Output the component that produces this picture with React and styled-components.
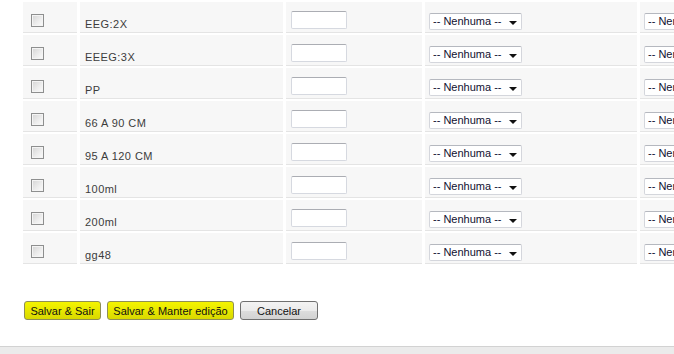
import React from 'react';
import styled, { createGlobalStyle } from 'styled-components';

const GlobalStyle = createGlobalStyle`
  html, body {
    margin: 0;
    padding: 0;
    background: #fff;
    overflow: hidden;
  }
  body {
    font-family: "Liberation Sans", Arial, sans-serif;
    font-size: 11px;
    color: #333;
  }
`;

const Page = styled.div`
  width: 674px;
  height: 354px;
  display: flex;
  flex-direction: column;
  overflow: hidden;
`;

const Content = styled.div`
  flex: 1;
  padding: 2px 0 0 23px;
`;

const Table = styled.div`
  display: flex;
  flex-direction: column;
  gap: 2px;
  width: 900px;
`;

const Row = styled.div`
  display: grid;
  grid-template-columns: 54px 203px 136px 212px 212px;
  column-gap: 3px;
`;

const Cell = styled.div`
  background: #f7f7f7;
  border-bottom: 1px solid #e4e4e4;
  box-sizing: content-box;
  padding-left: ${(p) => p.$pad || 4}px;
  padding-top: ${(p) => p.$top || 0}px;
  height: ${(p) => 30 - (p.$top || 0)}px;
`;

const Label = styled.span`
  display: block;
  line-height: 13px;
  color: #3c3c3c;
  font-family: "Liberation Sans", Arial, sans-serif;
  font-size: 11px;
  letter-spacing: 0.45px;
`;

const Check = styled.input.attrs({ type: 'checkbox' })`
  appearance: none;
  display: block;
  margin: 0;
  width: 13px;
  height: 13px;
  box-sizing: border-box;
  border: 1px solid #8e8f8f;
  background: linear-gradient(135deg, #d4d4d4 0%, #eeeeee 60%, #fbfbfb 100%);
  box-shadow: inset 0 0 0 1px #f4f4f4;
`;

const TextBox = styled.input.attrs({ type: 'text' })`
  display: block;
  margin: 0;
  width: 56px;
  height: 18px;
  box-sizing: border-box;
  border: 1px solid #d6d9e0;
  border-top-color: #abadb3;
  border-radius: 2px;
  background: #fff;
  padding: 0 2px;
`;

const SelectWrap = styled.div`
  position: relative;
  width: 93px;
  height: 17px;

  &::after {
    content: '';
    position: absolute;
    right: 5px;
    top: 8px;
    border-left: 4px solid transparent;
    border-right: 4px solid transparent;
    border-top: 4px solid #111;
    pointer-events: none;
  }
`;

const Select = styled.select`
  appearance: none;
  display: block;
  width: 100%;
  height: 100%;
  margin: 0;
  box-sizing: border-box;
  border: 1px solid #d4d6dc;
  border-top-color: #b5b8bf;
  border-radius: 2px;
  background: #fff;
  padding: 0 0 0 3px;
  font-family: "Liberation Sans", Arial, sans-serif;
  font-size: 11px;
  color: #101030;
  line-height: 15px;
`;

const Buttons = styled.div`
  display: flex;
  gap: 6px;
  margin-top: 37px;
  padding-left: 1px;
`;

const Button = styled.button`
  height: 19px;
  width: ${(p) => p.$w}px;
  margin: 0;
  padding: 0;
  box-sizing: border-box;
  white-space: nowrap;
  font-family: "Liberation Sans", Arial, sans-serif;
  font-size: 11px;
  color: #111;
  border-radius: 3px;
  border: 1px solid ${(p) => (p.$yellow ? '#8f8f55' : '#707070')};
  background: ${(p) =>
    p.$yellow
      ? 'linear-gradient(#f4f400, #e6e600 55%, #d9d900)'
      : 'linear-gradient(#f3f3f3, #ebebeb 50%, #dddddd 51%, #d2d2d2)'};
`;

const Footer = styled.div`
  height: 7px;
  border-top: 1px solid #d2d2d2;
  background: #ebebeb;
`;

const rows = ['EEG:2X', 'EEEG:3X', 'PP', '66 A 90 CM', '95 A 120 CM', '100ml', '200ml', 'gg48'];

const Choice = () => (
  <SelectWrap>
    <Select defaultValue="">
      <option value="">-- Nenhuma --</option>
    </Select>
  </SelectWrap>
);

export default function App() {
  return (
    <Page>
      <GlobalStyle />
      <Content>
        <Table>
          {rows.map((name) => (
            <Row key={name}>
              <Cell $pad={8} $top={12}>
                <Check />
              </Cell>
              <Cell $pad={5} $top={16}>
                <Label>{name}</Label>
              </Cell>
              <Cell $pad={5} $top={9}>
                <TextBox />
              </Cell>
              <Cell $pad={4} $top={11}>
                <Choice />
              </Cell>
              <Cell $pad={4} $top={11}>
                <Choice />
              </Cell>
            </Row>
          ))}
        </Table>
        <Buttons>
          <Button $yellow $w={77}>Salvar &amp; Sair</Button>
          <Button $yellow $w={127}>Salvar &amp; Manter edição</Button>
          <Button $w={78}>Cancelar</Button>
        </Buttons>
      </Content>
      <Footer />
    </Page>
  );
}
